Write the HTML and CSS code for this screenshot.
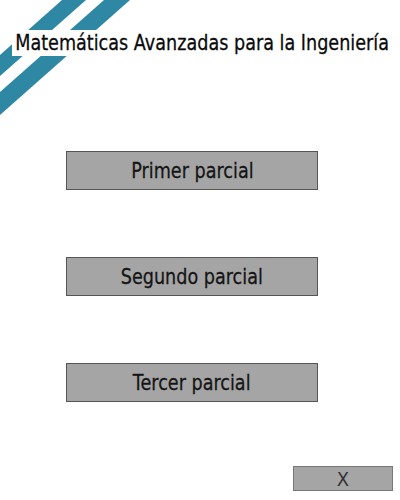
FILE: index.html
```html
<!DOCTYPE html>
<html>
<head>
<meta charset="utf-8">
<link rel="stylesheet" href="styles.css">
</head>
<body>
<div class="page">
  <svg class="stripes" width="140" height="120" viewBox="0 0 140 120">
    <polygon points="62,0 86,0 0,76 0,55" fill="#2f88a3"/>
    <polygon points="104,0 130,0 0,115 0,92" fill="#2f88a3"/>
  </svg>
  <h1 class="title"><span class="title-text">Matemáticas Avanzadas para la Ingeniería</span></h1>
  <div class="menu">
    <button class="btn"><span class="btn-text">Primer parcial</span></button>
    <button class="btn"><span class="btn-text">Segundo parcial</span></button>
    <button class="btn"><span class="btn-text">Tercer parcial</span></button>
  </div>
  <div class="footer">
    <button class="close"><span class="close-text">X</span></button>
  </div>
</div>
</body>
</html>
```
FILE: styles.css
```css
html, body {
  margin: 0;
  padding: 0;
  background: #ffffff;
}
.page {
  position: relative;
  width: 400px;
  height: 500px;
  overflow: hidden;
  font-family: "DejaVu Sans", sans-serif;
}
.stripes {
  position: absolute;
  left: 0;
  top: 0;
  z-index: 0;
}
.title {
  position: relative;
  z-index: 1;
  margin: 0;
  padding: 30px 0 0 12px;
  font-size: 22px;
  font-weight: normal;
  line-height: 26px;
  white-space: nowrap;
  color: #0a0a0a;
}
.title-text {
  display: inline-block;
  width: max-content;
  background: #ffffff;
  padding: 0 4px;
  transform: scaleX(0.8);
  transform-origin: left center;
  -webkit-text-stroke: 0.3px #0a0a0a;
}
.menu {
  display: flex;
  flex-direction: column;
  gap: 67px;
  margin: 95px 0 0 66px;
}
.btn {
  width: 252px;
  height: 39px;
  background: #a5a5a5;
  border: 1px solid #555;
  font-family: "DejaVu Sans", sans-serif;
  font-size: 22px;
  color: #151515;
  padding: 0;
  white-space: nowrap;
}
.btn-text {
  display: inline-block;
  transform: scaleX(0.8);
  transform-origin: center;
  -webkit-text-stroke: 0.3px #151515;
}
.footer {
  display: flex;
  justify-content: flex-end;
  padding: 64px 7px 0 0;
}
.close {
  width: 100px;
  height: 25px;
  background: #a5a5a5;
  border: 1px solid #777;
  font-family: "DejaVu Sans", sans-serif;
  font-size: 20px;
  line-height: 20px;
  color: #333;
  padding: 0;
}
.close-text {
  display: inline-block;
  transform: scaleX(0.9);
}
```
